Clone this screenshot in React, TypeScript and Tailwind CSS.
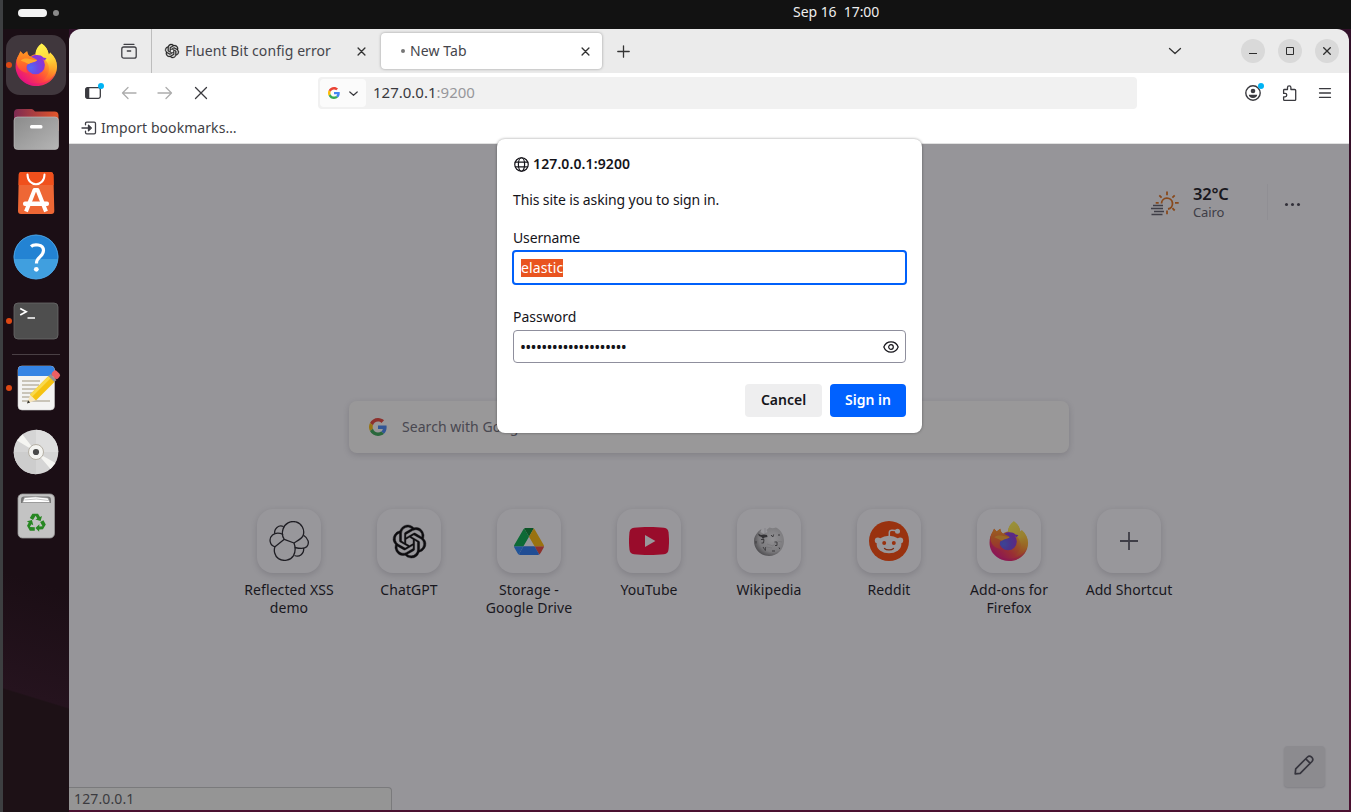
import type { ReactNode } from 'react';
import { SiOpenai } from 'react-icons/si';

type IconProps = { className?: string };

function Line({ className, box = 16, width = 1.25, children }: { className?: string; box?: number; width?: number; children: ReactNode }) {
  return (
    <svg className={className} viewBox={`0 0 ${box} ${box}`} fill="none" stroke="currentColor" strokeWidth={width} strokeLinecap="round" strokeLinejoin="round">
      {children}
    </svg>
  );
}

function GoogleG({ className }: IconProps) {
  return (
    <svg className={className} viewBox="0 0 48 48">
      <path fill="#EA4335" d="M24 9.5c3.54 0 6.71 1.22 9.21 3.6l6.85-6.85C35.9 2.38 30.47 0 24 0 14.62 0 6.51 5.38 2.56 13.22l7.98 6.19C12.43 13.72 17.74 9.5 24 9.5z" />
      <path fill="#4285F4" d="M46.98 24.55c0-1.57-.15-3.09-.38-4.55H24v9.02h12.94c-.58 2.96-2.26 5.48-4.78 7.18l7.73 6c4.51-4.18 7.09-10.36 7.09-17.65z" />
      <path fill="#FBBC05" d="M10.53 28.59c-.48-1.45-.76-2.99-.76-4.59s.27-3.14.76-4.59l-7.98-6.19C.92 16.46 0 20.12 0 24c0 3.88.92 7.54 2.56 10.78l7.97-6.19z" />
      <path fill="#34A853" d="M24 48c6.48 0 11.93-2.13 15.89-5.81l-7.73-6c-2.15 1.45-4.92 2.3-8.16 2.3-6.26 0-11.57-4.22-13.47-9.91l-7.98 6.19C6.51 42.62 14.62 48 24 48z" />
    </svg>
  );
}

function FirefoxLogo({ className, id }: IconProps & { id: string }) {
  return (
    <svg className={className} viewBox="0 0 44 44">
      <defs>
        <linearGradient id={`${id}-body`} x1="0.95" y1="0.25" x2="0.3" y2="0.95">
          <stop offset="0" stopColor="#ffe640" />
          <stop offset="0.25" stopColor="#ffae2e" />
          <stop offset="0.48" stopColor="#ff702c" />
          <stop offset="0.7" stopColor="#ff3f45" />
          <stop offset="1" stopColor="#e8177c" />
        </linearGradient>
        <linearGradient id={`${id}-flame`} x1="0.3" y1="0" x2="0.6" y2="1">
          <stop offset="0" stopColor="#fff44f" />
          <stop offset="0.5" stopColor="#ffd53a" />
          <stop offset="1" stopColor="#ff8a16" stopOpacity="0" />
        </linearGradient>
        <radialGradient id={`${id}-globe`} cx="0.25" cy="0.65" r="0.85">
          <stop offset="0" stopColor="#5468f5" />
          <stop offset="0.45" stopColor="#6f48e2" />
          <stop offset="1" stopColor="#9a2bcf" />
        </radialGradient>
        <linearGradient id={`${id}-head`} x1="0.3" y1="0" x2="0.3" y2="1">
          <stop offset="0" stopColor="#ff9a1f" />
          <stop offset="0.45" stopColor="#ff7426" />
          <stop offset="1" stopColor="#ff453f" />
        </linearGradient>
      </defs>
      <path fill={`url(#${id}-body)`} d="M27.2.4c4.400 2.800 6.600 6.600 7.200 11 1.200-.2 1.500-1.600 1.500-1.600 4.500 4 7.100 8.700 7.100 14C43 35.500 33.400 44 22 44S.6 35 .6 24c0-5 1.200-8.500 3.200-11.500l1.800-4 2.800 3.100 4-3.100c.4 2.700 1.400 4.300 3 5.400 2-1.500 3.600-2.200 5.600-2.400.2-4 2.500-7.800 6.200-10.400z" />
      <path fill="#e2127f" opacity="0.4" d="M1.500 30C5 38 13 41.500 22 41.500S38 38 42 29c-2 9-10.500 15-20 15S3.500 38 1.500 30z" />
      <path fill={`url(#${id}-flame)`} d="M27.200.4c4.800 3.200 7 7.500 7.300 12 .9-.5 1.300-1.600 1.400-2.600 7.500 7.200 8.500 15.500 4.500 23-3.400 4.700-8.400 6.200-11.400 5.200 6-5 8-13 3-19.500C28.500 14 20.500 14.500 21 10.800c.2-4 2.500-7.800 6.200-10.400z" />
      <circle cx="21" cy="22.500" r="9.600" fill={`url(#${id}-globe)`} />
      <path fill="#8a35dc" d="M17.500 13.700c3-2.200 9.500-1.800 11.500 1.100l3.300.8-2 2.200c-3-2.400-8-3.700-12.800-4.100z" />
      <path fill={`url(#${id}-head)`} d="M1.600 17.500c.8-3.500 2.600-5.500 4-9l2.800 3.100 4-3.100c.2 3.200 1.700 5 4.300 5.900 1.600.6 3.800 1.700 6 3.100-1 1.300-2.600 1.600-4.200 2-2 .5-3.700 1.200-5 2-1.300.9-2 2.700-1.900 4.500.1 2 .8 3.500 1.700 4.700-8-.5-12.200-6.700-11.700-13.200z" />
      <path fill="#ffa72b" d="M5.800 17.800c2.400-2.300 6-2.200 9-1.500 2.700.6 5.200.8 7.900 1.400-1 1.300-2.800 1.600-4.300 2-2 .5-3 1.100-4.200 1.900-2.600-1.300-5.200-2.600-8.400-3.800z" />
    </svg>
  );
}

function FilesIcon() {
  return (
    <svg className="size-[46px]" viewBox="0 0 46 46">
      <defs>
        <linearGradient id="folder-back" x1="0" x2="1"><stop offset="0" stopColor="#7d2a52" /><stop offset="1" stopColor="#e4572a" /></linearGradient>
        <linearGradient id="folder-front" x1="0" y1="0" x2="1" y2="1"><stop offset="0" stopColor="#8b8b8b" /><stop offset="1" stopColor="#b5b5b5" /></linearGradient>
      </defs>
      <path fill="url(#folder-back)" d="M1 7a4 4 0 0 1 4-4h12c2 0 3 .4 4 1.500l1 1H41.500a4 4 0 0 1 4 4V25H1z" />
      <rect x="1" y="11" width="44.500" height="32.500" rx="3.500" fill="url(#folder-front)" stroke="#c4c4c4" strokeWidth=".6" />
      <rect x="17" y="19" width="12.500" height="3.500" rx="1.500" fill="#fff" />
    </svg>
  );
}

function SoftwareIcon() {
  return (
    <svg className="size-[46px]" viewBox="0 0 46 46">
      <path fill="#ee6735" d="M8.300 2h29.400a2.700 2.700 0 0 1 2.700 2.500L41.300 41a3 3 0 0 1-3 3H8a3 3 0 0 1-3-3L5.800 4.500A2.500 2.500 0 0 1 8.300 2z" />
      <path fill="#f0501c" d="M8.300 2h29.400a2.700 2.700 0 0 1 2.700 2.500l.3 10.500H5.500l.3-10.500A2.500 2.500 0 0 1 8.300 2z" />
      <path d="M14.500 4.500c0 13 17 13 17 0" fill="none" stroke="#fff" strokeWidth="2" strokeLinecap="round" />
      <path d="M13 41.500 21.500 20h3L33 41.500" fill="none" stroke="#fff" strokeWidth="4" strokeLinejoin="round" />
      <rect x="10" y="31.500" width="26" height="4.500" rx="2" fill="#fff" />
    </svg>
  );
}

function HelpIcon() {
  return (
    <svg className="size-[46px]" viewBox="0 0 46 46">
      <defs><clipPath id="help-disc"><circle cx="23" cy="23" r="22" /></clipPath></defs>
      <circle cx="23" cy="23" r="22.300" fill="#2383d3" />
      <rect x="0" y="25" width="46" height="21" fill="#409fdf" clipPath="url(#help-disc)" />
      <circle cx="23" cy="23" r="22" fill="none" stroke="#54aae6" strokeWidth=".8" />
      <path d="M18 12.500c2.500-2.300 12.500-3 12.500 4 0 6.500-7.500 6.500-7 13" fill="none" stroke="#fff" strokeWidth="3.200" />
      <circle cx="23.300" cy="35.300" r="2.400" fill="#fff" />
    </svg>
  );
}

function TerminalIcon() {
  return (
    <svg className="size-[46px]" viewBox="0 0 46 46">
      <rect x="1" y="5" width="44" height="36" rx="4" fill="#4e4e4e" stroke="#6b6b6b" strokeWidth=".8" />
      <path d="m7.200 10.500 6 3.300-6 3.300M14.500 20h7.500" fill="none" stroke="#fff" strokeWidth="1.700" />
    </svg>
  );
}

function EditorIcon() {
  return (
    <svg className="size-[46px] overflow-visible" viewBox="0 0 46 46">
      <rect x="5" y="1" width="36.500" height="44" rx="4" fill="#f3f3f2" stroke="#c9c9c9" strokeWidth=".6" />
      <path d="M5 11V5a4 4 0 0 1 4-4h28.500a4 4 0 0 1 4 4v6z" fill="#3584e4" />
      <path d="M9 16h18M9 20h17M9 24h15M9 28h13M9 32h10M9 36h28" stroke="#c9c4b8" strokeWidth="1.800" />
      <g transform="translate(14 38.500) rotate(-45)">
        <path d="M0 0 9-4.200V4.200z" fill="#f7e6bd" />
        <path d="M0 0 3-1.500v3z" fill="#333" />
        <rect x="8.500" y="-4.200" width="26.500" height="8.400" fill="#f5c211" />
        <rect x="8.500" y="-4.200" width="26.500" height="3" fill="#f9d94c" />
        <rect x="34.500" y="-4.200" width="3" height="8.400" fill="#96958f" />
        <rect x="37.500" y="-4.200" width="6.500" height="8.400" rx="2.500" fill="#ee5f63" />
      </g>
    </svg>
  );
}

function DiscIcon() {
  return (
    <svg className="size-[46px]" viewBox="0 0 46 46">
      <circle cx="23" cy="23" r="22.300" fill="#d5d5d5" />
      <path d="M23 23V.700A22.300 22.300 0 0 1 45.300 23z" fill="#dedede" />
      <path d="M23 23v22.300A22.300 22.300 0 0 1 .7 23z" fill="#cdcdcd" />
      <path d="M23 23 4 11.500 9.500 5.500zM23 23l19.500 11-5 6z" fill="#f5f5f2" />
      <circle cx="23" cy="23" r="7.500" fill="#f4f4f1" stroke="#b5b0a5" strokeWidth="1" />
      <circle cx="23" cy="23" r="3.100" fill="#494949" />
    </svg>
  );
}

function TrashIcon() {
  return (
    <svg className="size-[46px]" viewBox="0 0 46 46">
      <rect x="5" y="1" width="36.500" height="44" rx="4.500" fill="#c3c3c3" stroke="#989898" strokeWidth=".8" />
      <path d="M8 7c0-3 1-3.500 3-3.500h24c2 0 3 1 3 3.500v3H8z" fill="#777" />
      <path d="m9.500 9.500 2-5 11-.7 12.500 1.200 2 4.500z" fill="#fff" stroke="#888" strokeWidth=".6" />
      <path d="m11.500 7 12-1 12 1.500" stroke="#aaa" strokeWidth=".7" fill="none" />
      <g transform="translate(23 30)" fill="#278722">
        {[0, 120, 240].map((a) => (
          <g key={a} transform={`rotate(${a})`}>
            <path d="M-6.200-5-3.600-9.200h5.600l2 3.200 2-1.100L4.600-2-.6-3.500l1.900-1.100-1.700-2.700-2.600 4.200z" />
          </g>
        ))}
      </g>
    </svg>
  );
}

function DockSlot({ children, running, active }: { children: ReactNode; running?: boolean; active?: boolean }) {
  return (
    <div className="relative flex h-16 w-full items-center justify-center">
      {running && <span className="absolute left-[3px] top-[29px] size-[5.500px] rounded-full bg-[#dd4814]" />}
      <div className={active ? 'flex size-[60px] items-center justify-center rounded-[14px] bg-[#40373d]' : 'flex items-center justify-center'}>{children}</div>
    </div>
  );
}

function Dock() {
  return (
    <aside className="flex w-[66px] shrink-0 flex-col items-center bg-[linear-gradient(197deg,#1b0e15_0,#1b0e15_70%,#25131e_84.5%,#1d1116_84.7%)] pt-1">
      <DockSlot running active><FirefoxLogo id="dock" className="size-[43px] -translate-y-px" /></DockSlot>
      <DockSlot><FilesIcon /></DockSlot>
      <DockSlot><SoftwareIcon /></DockSlot>
      <DockSlot><HelpIcon /></DockSlot>
      <DockSlot running><TerminalIcon /></DockSlot>
      <div className="my-px h-px w-12 bg-[#4a4045]" />
      <DockSlot running><EditorIcon /></DockSlot>
      <DockSlot><DiscIcon /></DockSlot>
      <DockSlot><TrashIcon /></DockSlot>
    </aside>
  );
}

function CloseX({ className }: IconProps) {
  return <Line className={className} box={10} width={1.500}><path d="m1.200 1.200 7.600 7.600M8.800 1.200 1.200 8.800" /></Line>;
}

function TabStrip() {
  return (
    <div className="flex h-11 shrink-0 items-center bg-[#ebebeb] text-[#45454b]">
      <div className="flex h-full w-[83px] items-center justify-end border-r border-[#bdbdbd] pr-[14px] text-[#3f3f44]">
        <Line className="size-4" width={1.300}><rect x=".8" y="4" width="14.400" height="11.200" rx="2" /><path d="M3 1.300h10M6.300 8h3.400" /></Line>
      </div>
      <div className="flex w-[229px] items-center pl-[13px]">
        <SiOpenai className="size-[14px] overflow-visible stroke-[#222] stroke-[0.6] text-[#222]" />
        <span className="ml-[6px] flex-1 whitespace-nowrap pb-[2px] text-[14px] tracking-[0.080px]">Fluent Bit config error</span>
        <CloseX className="mr-[15px] size-[9px] text-[#333]" />
      </div>
      <div className="flex h-9 w-[221px] items-center rounded bg-white pl-5 pr-3 shadow-[0_0_3px_rgba(0,0,0,0.35)]">
        <span className="size-1 rounded-full bg-[#777]" />
        <span className="ml-[5px] flex-1 pb-[2px] text-[14px] tracking-[0.100px]">New Tab</span>
        <CloseX className="size-[9px] text-[#333]" />
      </div>
      <Line className="ml-[15px] size-[13px] text-[#333]" box={13} width={1.300}><path d="M6.500.8v11.400M.8 6.500h11.400" /></Line>
      <div className="flex-1" />
      <Line className="mr-[59px] size-[14px] text-[#333]" box={14} width={1.300}><path d="m1.500 4.500 5.500 5 5.500-5" /></Line>
      <div className="flex gap-[13px] pr-[10px] text-[#2d2d2d]">
        <span className="flex size-6 items-center justify-center rounded-full bg-[#d9d9d9]"><svg className="size-2" viewBox="0 0 8 8"><path d="M0 6.500h8" stroke="currentColor" /></svg></span>
        <span className="flex size-6 items-center justify-center rounded-full bg-[#d9d9d9]"><svg className="size-2" viewBox="0 0 8 8"><path d="M.5.5h7v7h-7z" fill="none" stroke="currentColor" /></svg></span>
        <span className="flex size-6 items-center justify-center rounded-full bg-[#d9d9d9]"><svg className="size-2" viewBox="0 0 8 8"><path d="m.3.3 7.400 7.400M7.700.3.300 7.700" stroke="currentColor" strokeWidth="1.300" /></svg></span>
      </div>
    </div>
  );
}

function NavBar() {
  return (
    <div className="flex h-10 shrink-0 items-center bg-white pl-4 text-[#3a3a3f]">
      <div className="relative">
        <svg className="h-[14px] w-4" viewBox="0 0 16 14"><rect x=".7" y="1.700" width="14.600" height="10.600" rx="1.800" fill="none" stroke="currentColor" strokeWidth="1.300" /><path d="M.7 3c0-.8.500-1.300 1.300-1.300h2.300v10.600H2c-.8 0-1.300-.5-1.300-1.300z" fill="currentColor" /></svg>
        <span className="absolute -right-[3px] -top-[3px] size-[6px] rounded-full bg-[#00b3f4]" />
      </div>
      <Line className="ml-5 size-4 text-[#adadad]" width={1.300}><path d="M15 8H1.500M7 2.500 1.500 8 7 13.500" /></Line>
      <Line className="ml-5 size-4 text-[#adadad]" width={1.300}><path d="M1 8h13.500M9 2.500 14.500 8 9 13.500" /></Line>
      <Line className="ml-5 size-4" width={1.300}><path d="m2.500 2.500 11 11M13.500 2.500l-11 11" /></Line>
      <div className="ml-[109px] flex h-8 w-[819px] items-center rounded bg-[#f1f1f1] pl-[2px]">
        <div className="flex h-7 w-[46px] items-center rounded bg-[#fbfbfb] pl-2">
          <GoogleG className="size-3" />
          <Line className="ml-[9px] size-[9px]" box={9} width={1.200}><path d="M.8 3 4.500 6.300 8.200 3" /></Line>
        </div>
        <span className="ml-[7px] pb-[2px] text-[15px] text-[#39393e]">127.0.0.1<span className="text-[#97979b]">:9200</span></span>
      </div>
      <div className="relative ml-[108px]">
        <svg className="size-4" viewBox="0 0 16 16"><circle cx="8" cy="8" r="7.200" fill="none" stroke="currentColor" strokeWidth="1.400" /><circle cx="8" cy="6" r="2.300" fill="currentColor" /><path d="M3.800 9.700h8.400c0 2-1.700 3.200-4.200 3.200s-4.200-1.200-4.200-3.200z" fill="currentColor" /></svg>
        <span className="absolute -right-[3px] -top-[2px] size-[6px] rounded-full bg-[#00b3f4]" />
      </div>
      <Line className="ml-5 size-4" width={1.300}><path d="M3 4.500h3.500V2.600a1.700 1.700 0 0 1 3.400 0v1.900h3.800c.6 0 1 .4 1 1v8.900c0 .6-.4 1-1 1H3.500c-.5 0-.9-.4-.9-.9v-2.700h1.500a1.700 1.700 0 0 0 0-3.400H2.600V5.500c0-.6.1-1 .4-1z" /></Line>
      <Line className="ml-5 size-4" width={1.300}><path d="M2.500 3.600h11M2.500 8h11M2.500 12.400h11" /></Line>
    </div>
  );
}

function BookmarksBar() {
  return (
    <div className="flex h-[31px] shrink-0 items-center border-b border-[#e1e1e1] bg-white pl-3 text-[#3f3f46]">
      <Line className="size-4" width={1.300}><path d="M4.500 4.800V3.500c0-.8.500-1.300 1.300-1.300h7.400c.8 0 1.300.5 1.300 1.300v9c0 .8-.5 1.300-1.300 1.300H5.800c-.8 0-1.300-.5-1.300-1.300v-1.300" /><path d="M1 8h7.500" /><path d="M7.500 5.200 10.300 8l-2.800 2.800z" fill="currentColor" /></Line>
      <span className="ml-1 pb-[2px] text-[14px] tracking-[0.070px]">Import bookmarks…</span>
    </div>
  );
}

function ElasticMark() {
  return (
    <svg className="size-10" viewBox="0 0 40 40" fill="none" stroke="#222227" strokeWidth="1.300" strokeLinejoin="round">
      <path d="M15.300 18.300C13 15.500 13.200 11 14 8.200a10.500 10.500 0 0 1 20.300 5.800c-1 3.500-5.300 5.500-9.300 8z" />
      <path d="M15.300 18.300 6 25.800c-1.500 3.500-.5 9 3.500 11.800 5 3.200 12 2 15-3 2.200-4 2-8.500.5-12.600" />
      <path d="M14.200 13.500C10.500 11.800 6 12 3.500 14-.5 17.500.5 24.300 6 25.800M34.500 14.200c5 3 6.200 8.300 3.200 11.600-2 2.200-6 2-12 .7" />
      <path d="M5.700 12.700C5 7.500 9.500 3.500 14.500 5.500M34.600 27c.8 5.500-4.300 9.800-9.100 7.500" />
    </svg>
  );
}

function DriveMark() {
  return (
    <svg className="h-[27px] w-[30px]" viewBox="0 0 87.3 78">
      <path fill="#2684fc" d="m6.600 66.850 3.850 6.650c.8 1.400 1.950 2.500 3.300 3.300L27.500 53H0c0 1.550.4 3.100 1.200 4.500z" />
      <path fill="#00ac47" d="M43.650 25 29.900 1.200c-1.350.8-2.500 1.900-3.300 3.300L1.200 48.500A9.060 9.060 0 0 0 0 53h27.500z" />
      <path fill="#ea4335" d="M73.550 76.800c1.350-.8 2.500-1.900 3.300-3.300l1.600-2.750L86.100 57.500c.8-1.400 1.200-2.950 1.200-4.500H59.798l5.852 11.500z" />
      <path fill="#00832d" d="M43.650 25 57.400 1.200C56.050.4 54.500 0 52.900 0H34.400c-1.600 0-3.150.45-4.500 1.200z" />
      <path fill="#2677f2" d="M59.800 53H27.500L13.750 76.800c1.350.8 2.900 1.200 4.500 1.200h50.800c1.600 0 3.150-.45 4.500-1.200z" />
      <path fill="#ffba00" d="M73.400 26.500 60.700 4.500c-.8-1.400-1.950-2.500-3.300-3.300L43.650 25l16.150 28h27.450c0-1.550-.4-3.100-1.200-4.500z" />
    </svg>
  );
}

function YouTubeMark() {
  return (
    <svg className="h-7 w-10" viewBox="0 0 40 28">
      <path fill="#ff0033" d="M5 .8C13-.2 27-.2 35 .8c3 .4 4.200 2 4.500 4.500.7 6 .7 11.400 0 17.400-.3 2.500-1.500 4.100-4.500 4.500-8 1-22 1-30 0-3-.4-4.200-2-4.500-4.500-.7-6-.7-11.400 0-17.400C.8 2.800 2 1.200 5 .8z" />
      <path fill="#fff" d="M16 8v12l10.400-6z" />
    </svg>
  );
}

function WikipediaMark() {
  return (
    <svg className="size-8" viewBox="0 0 32 32">
      <defs><radialGradient id="wiki" cx=".62" cy=".4" r=".65"><stop offset="0" stopColor="#f2f2f2" /><stop offset=".7" stopColor="#c8c8c8" /><stop offset="1" stopColor="#777" /></radialGradient></defs>
      <path fill="url(#wiki)" d="M4.500 7.500c2-2.300 3-3 4-3.300L7.500 7l3.500 2 3.500-2-1-2 3-2.500c1.500.2 3 1 4.500.5l2-.5C28 5 31 10 31 16c0 8.300-6.700 15-15 15S1 24.300 1 16c0-3.400 1.300-6 3.500-8.500z" />
      <path fill="#444" d="M5 8.500 8 10l3-.5 3 .5.5 2-3 .5L10 14l-1.500-2L6 11z" />
      <path d="M8 14.500h3l-.5 3.500H8.500M18 10l1.800 2 .8-2.500M21.500 17h2.500v3.500h-2M10 22l2.300 3.500.2-3.500M25 10h2M26 22.500l.8 1.500M3 16v2.500M19 26h3" fill="none" stroke="#555" strokeWidth="1" />
      <path d="M12 3v7M14 19l6 2 4-5 5 1M10 27l3-5 6 1" stroke="#aaa" strokeWidth=".4" fill="none" />
    </svg>
  );
}

function RedditMark() {
  return (
    <svg className="size-10" viewBox="0 0 40 40">
      <circle cx="20" cy="20" r="20" fill="#ff4500" />
      <circle cx="8.800" cy="19.500" r="3" fill="#fff" />
      <circle cx="31.200" cy="19.500" r="3" fill="#fff" />
      <ellipse cx="20" cy="23.500" rx="12.300" ry="8.800" fill="#fff" />
      <circle cx="28.500" cy="10.200" r="2.500" fill="#fff" />
      <path d="M20.300 15v-3.500c0-2 1.500-2.500 3-2.300l4.500.5" fill="none" stroke="#fff" strokeWidth="1.500" />
      <circle cx="15.200" cy="22" r="2" fill="#ff4500" />
      <circle cx="24.800" cy="22" r="2" fill="#ff4500" />
      <path d="M15.500 27.500c2 1.800 7 1.800 9 0" fill="none" stroke="#c33a0a" strokeWidth="1.300" strokeLinecap="round" />
    </svg>
  );
}

const shortcuts: { label: string; icon: ReactNode }[] = [
  { label: 'Reflected XSS demo', icon: <ElasticMark /> },
  { label: 'ChatGPT', icon: <SiOpenai className="size-[33px] overflow-visible stroke-black stroke-[0.3] text-black" /> },
  { label: 'Storage - Google Drive', icon: <DriveMark /> },
  { label: 'YouTube', icon: <YouTubeMark /> },
  { label: 'Wikipedia', icon: <WikipediaMark /> },
  { label: 'Reddit', icon: <RedditMark /> },
  { label: 'Add-ons for Firefox', icon: <FirefoxLogo id="addons" className="size-10" /> },
  { label: 'Add Shortcut', icon: <svg className="size-[18px]" viewBox="0 0 18 18"><path d="M9 0v18M0 9h18" stroke="#5b5b66" strokeWidth="1.800" /></svg> },
];

function NewTabPage() {
  return (
    <div className="flex h-full flex-col items-center bg-[#f9f9fb]">
      <div className="flex h-[257px] w-full items-start justify-end pt-10">
        <svg className="mt-[6px] h-7 w-[30px]" viewBox="0 0 30 28" fill="none" strokeWidth="1.800">
          <path d="M11.500 13.500a5.500 5.500 0 1 1 6.500 5.500" stroke="#e07018" />
          <path d="M17 1.500v3.700M17 20.500v3.700M25 12.900h3.700M5.700 12.900h3M9.300 5.300l2.300 2.300M24.700 5.300l-2.300 2.300M24.700 20.500l-2.300-2.300" stroke="#e07018" />
          <path d="M3 15.500h10M1 18.500h12M4 21.500h10M1.500 24.500h11" stroke="#5b5b66" strokeWidth="1.500" />
        </svg>
        <div className="-mt-px ml-[13px] w-[74px]">
          <div className="text-[16.500px] font-semibold leading-[21px] tracking-[-0.200px] text-[#15141a]">32°C</div>
          <div className="text-[13px] leading-4 tracking-[-0.100px] text-[#5b5b66]">Cairo</div>
        </div>
        <div className="h-9 w-px bg-[#efeff2]" />
        <div className="ml-[17px] mr-[49px] mt-[19px] flex gap-[3px]">
          <i className="size-[3px] rounded-full bg-[#42414d]" /><i className="size-[3px] rounded-full bg-[#42414d]" /><i className="size-[3px] rounded-full bg-[#42414d]" />
        </div>
      </div>
      <div className="flex h-[52px] w-[720px] items-center rounded-lg bg-[#fffffb] pl-5 shadow-[0_2px_6px_rgba(58,57,68,0.2)]">
        <GoogleG className="size-[18px]" />
        <span className="ml-[15px] pb-[2px] text-[14px] tracking-[0.050px] text-[#6d6d78]">Search with Google or enter address</span>
      </div>
      <div className="mt-14 grid grid-cols-[repeat(8,120px)]">
        {shortcuts.map((s) => (
          <div key={s.label} className="flex flex-col items-center">
            <div className="flex size-16 items-center justify-center rounded-2xl bg-[#fdfdff] shadow-[0_2px_6px_rgba(58,57,68,0.2)]">{s.icon}</div>
            <div className="mt-2 w-[106px] text-center text-[14px] leading-[18px] tracking-[0.070px] text-[#15141a]">{s.label}</div>
          </div>
        ))}
      </div>
    </div>
  );
}

function SignInDialog() {
  return (
    <div role="dialog" className="absolute left-[428px] top-[110px] flex h-[294px] w-[425px] flex-col rounded-lg bg-white px-4 pt-4 text-[14px] text-[#15141a] shadow-[0_0_3px_rgba(0,0,0,0.4)]">
      <div className="flex h-[18px] items-center">
        <Line className="ml-px size-[15px]" width={1.300}><circle cx="8" cy="8" r="7.200" /><ellipse cx="8" cy="8" rx="3.300" ry="7.200" /><path d="M1.500 5.500h13M1.500 10.500h13" /></Line>
        <span className="ml-1 pb-[2px] font-semibold tracking-[0.120px]">127.0.0.1:9200</span>
      </div>
      <div className="mt-[18px] leading-[18px] tracking-[-0.110px]">This site is asking you to sign in.</div>
      <div className="mt-5 leading-[18px] tracking-[-0.150px]">Username</div>
      <div className="-mx-px mt-[3px] flex h-[35px] shrink-0 items-center rounded border-2 border-[#0060fa] pl-[7px]">
        <span className="flex h-[18px] items-center bg-[#e95420] leading-none tracking-[0.120px] text-white">elastic</span>
      </div>
      <div className="mt-[23px] leading-[18px]">Password</div>
      <div className="mt-1 flex h-[33px] shrink-0 items-center justify-between rounded border border-[#8f8f9d] pl-[6px] pr-[6px]">
        <span className="pt-px text-[16px] leading-none tracking-[-0.710px]">••••••••••••••••••••</span>
        <Line className="size-4" width={1.200}><path d="M.8 8C2 5 4.800 2.900 8 2.900S14 5 15.200 8C14 11 11.200 13.100 8 13.100S2 11 .8 8z" /><circle cx="8" cy="8" r="2.300" /></Line>
      </div>
      <div className="mt-[21px] flex justify-end gap-2 font-semibold">
        <button className="h-[33px] w-[77px] rounded bg-[#eeeeef] pb-[2px]">Cancel</button>
        <button className="h-[33px] w-[76px] rounded bg-[#0061ff] pb-[2px] text-white">Sign in</button>
      </div>
    </div>
  );
}

export default function App() {
  return (
    <div className="flex h-[812px] w-[1351px] overflow-hidden bg-[#3d3f41] pl-[3px] font-['Noto_Sans',sans-serif]">
      <div className="flex flex-1 flex-col bg-[linear-gradient(#30112a,#471029_60%,#4a1030)]">
        <header className="relative flex h-[29px] shrink-0 items-center bg-[#121212] pb-[3px] pl-[15px]">
          <span className="h-2 w-[29px] rounded-full bg-[#f2f2f2]" />
          <span className="ml-[6px] size-[6px] rounded-full bg-[#8a8a8a]" />
          <span className="absolute left-[790px] top-[3px] whitespace-pre text-[14px] leading-[18px] tracking-[-0.050px] text-[#eeeeee]">Sep 16  17:00</span>
        </header>
        <div className="flex min-h-0 flex-1">
          <Dock />
          <main className="relative mb-[2px] mr-[2px] flex flex-1 flex-col overflow-hidden rounded-t-xl">
            <TabStrip />
            <NavBar />
            <BookmarksBar />
            <div className="relative min-h-0 flex-1">
              <NewTabPage />
              <div className="absolute bottom-[23px] right-6 flex size-[41px] items-center justify-center rounded bg-[#e8e8ea] pb-[3px] pr-[2px] shadow-[0_1px_2px_rgba(58,57,68,0.2)]">
                <Line className="size-5 text-[#4a4a54]" box={20} width={1.700}><path d="m1.200 18.800.5-5L13.500 2c2.500-2.500 7 1.500 4.500 4.500L6.200 18.300zM11.800 3.800l4.500 4.500" /></Line>
              </div>
              <div className="absolute inset-0 bg-[rgba(28,27,34,0.45)]" />
              <div className="absolute bottom-0 left-0 flex h-[23px] w-[323px] items-center rounded-tr border-r border-t border-[#7a7a7c] bg-[#959595] pb-[2px] pl-[5px] text-[14px] tracking-[0.120px] text-[#3b3b3f]">127.0.0.1</div>
            </div>
            <SignInDialog />
          </main>
        </div>
      </div>
    </div>
  );
}
